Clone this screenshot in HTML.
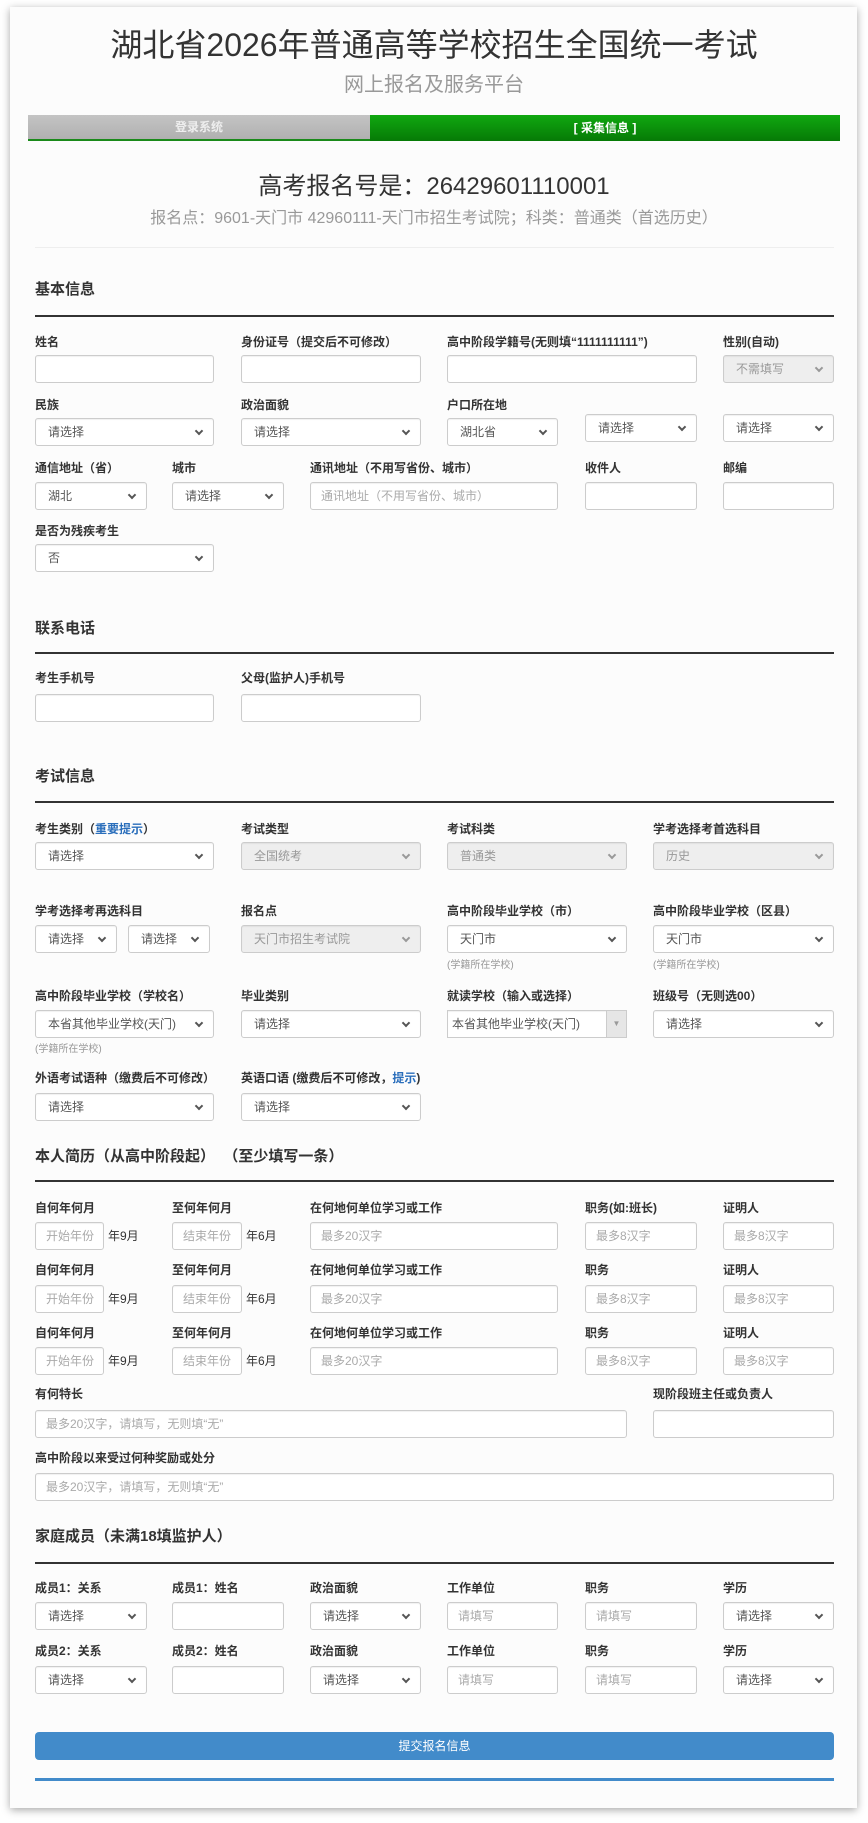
<!DOCTYPE html>
<html><head><meta charset="utf-8">
<style>
*{margin:0;padding:0;box-sizing:border-box}
body{width:868px;height:1823px;background:#fff;font-family:"Liberation Sans","Noto Sans CJK SC",sans-serif;position:relative;overflow:hidden}
.card{position:absolute;left:10px;top:7px;width:847px;height:1801px;background:#fcfcfc;box-shadow:0 2px 8px rgba(0,0,0,.35)}
.a{position:absolute}
.t{position:absolute;left:0;width:868px;text-align:center;white-space:nowrap}
.l{position:absolute;font-size:12px;font-weight:bold;color:#333;line-height:16px;white-space:nowrap}
.h{position:absolute;left:35px;font-size:15px;font-weight:bold;color:#333;line-height:20px}
.ln{position:absolute;left:35px;width:799px;height:2px;background:#333}
.i{position:absolute;height:28px;border:1px solid #ccc;border-radius:3px;background:#fff;font-size:12px;color:#555;padding-left:12px;line-height:26px;white-space:nowrap;overflow:hidden;box-shadow:inset 0 1px 1px rgba(0,0,0,.06)}
.p{color:#aaa;padding-left:10px}
.d{background:#eee;color:#999}
.s::after{content:"";position:absolute;right:11px;top:9px;width:4px;height:4px;border-right:2px solid #555;border-bottom:2px solid #555;transform:rotate(45deg)}
.d.s::after{border-color:#999}
.sm{position:absolute;font-size:10px;color:#999;line-height:14px}
.bl{color:#2a6ebb}
</style></head><body>
<div class="card"></div>
<div class="t" style="top:24px;font-size:32px;color:#333;line-height:42px">湖北省2026年普通高等学校招生全国统一考试</div>
<div class="t" style="top:72px;font-size:20px;color:#999;line-height:26px">网上报名及服务平台</div>
<div class="a" style="left:28px;top:115px;width:342px;height:26px;background:linear-gradient(#c4c4c4,#b0b0b0);border-bottom:2px solid #1a8a1a;color:#eee;font-size:12px;font-weight:bold;text-align:center;line-height:25px">登录系统</div>
<div class="a" style="left:370px;top:115px;width:470px;height:26px;background:linear-gradient(#10a810,#067a06);color:#fff;font-size:12px;font-weight:bold;text-align:center;line-height:26px">[ 采集信息 ]</div>
<div class="t" style="top:172px;font-size:24px;color:#333;line-height:30px">高考报名号是：26429601110001</div>
<div class="t" style="top:209px;font-size:16px;color:#999;line-height:20px">报名点：9601-天门市 42960111-天门市招生考试院；科类：普通类（首选历史）</div>
<div class="a" style="left:35px;top:247px;width:799px;height:1px;background:#eee"></div>

<div class="h" style="top:280px">基本信息</div><div class="ln" style="top:315px"></div>
<div class="l" style="left:35px;top:334px">姓名</div>
<div class="l" style="left:241px;top:334px">身份证号（提交后不可修改）</div>
<div class="l" style="left:447px;top:334px">高中阶段学籍号(无则填“1111111111”)</div>
<div class="l" style="left:723px;top:334px">性别(自动)</div>
<div class="i" style="left:35px;top:355px;width:179px"></div>
<div class="i" style="left:241px;top:355px;width:180px"></div>
<div class="i" style="left:447px;top:355px;width:250px"></div>
<div class="i s d" style="left:723px;top:355px;width:111px">不需填写</div>

<div class="l" style="left:35px;top:397px">民族</div>
<div class="l" style="left:241px;top:397px">政治面貌</div>
<div class="l" style="left:447px;top:397px">户口所在地</div>
<div class="i s" style="left:35px;top:418px;width:179px">请选择</div>
<div class="i s" style="left:241px;top:418px;width:180px">请选择</div>
<div class="i s" style="left:447px;top:418px;width:111px">湖北省</div>
<div class="i s" style="left:585px;top:414px;width:112px">请选择</div>
<div class="i s" style="left:723px;top:414px;width:111px">请选择</div>

<div class="l" style="left:35px;top:460px">通信地址（省）</div>
<div class="l" style="left:172px;top:460px">城市</div>
<div class="l" style="left:310px;top:460px">通讯地址（不用写省份、城市）</div>
<div class="l" style="left:585px;top:460px">收件人</div>
<div class="l" style="left:723px;top:460px">邮编</div>
<div class="i s" style="left:35px;top:482px;width:112px">湖北</div>
<div class="i s" style="left:172px;top:482px;width:112px">请选择</div>
<div class="i p" style="left:310px;top:482px;width:248px">通讯地址（不用写省份、城市）</div>
<div class="i" style="left:585px;top:482px;width:112px"></div>
<div class="i" style="left:723px;top:482px;width:111px"></div>
<div class="l" style="left:35px;top:523px">是否为残疾考生</div>
<div class="i s" style="left:35px;top:544px;width:179px">否</div>

<div class="h" style="top:619px">联系电话</div><div class="ln" style="top:652px"></div>
<div class="l" style="left:35px;top:670px">考生手机号</div>
<div class="l" style="left:241px;top:670px">父母(监护人)手机号</div>
<div class="i" style="left:35px;top:694px;width:179px"></div>
<div class="i" style="left:241px;top:694px;width:180px"></div>

<div class="h" style="top:767px">考试信息</div><div class="ln" style="top:801px"></div>
<div class="l" style="left:35px;top:821px">考生类别（<span class="bl">重要提示</span>）</div>
<div class="l" style="left:241px;top:821px">考试类型</div>
<div class="l" style="left:447px;top:821px">考试科类</div>
<div class="l" style="left:653px;top:821px">学考选择考首选科目</div>
<div class="i s" style="left:35px;top:842px;width:179px">请选择</div>
<div class="i s d" style="left:241px;top:842px;width:180px">全国统考</div>
<div class="i s d" style="left:447px;top:842px;width:180px">普通类</div>
<div class="i s d" style="left:653px;top:842px;width:181px">历史</div>

<div class="l" style="left:35px;top:903px">学考选择考再选科目</div>
<div class="l" style="left:241px;top:903px">报名点</div>
<div class="l" style="left:447px;top:903px">高中阶段毕业学校（市）</div>
<div class="l" style="left:653px;top:903px">高中阶段毕业学校（区县）</div>
<div class="i s" style="left:35px;top:925px;width:82px">请选择</div>
<div class="i s" style="left:128px;top:925px;width:82px">请选择</div>
<div class="i s d" style="left:241px;top:925px;width:180px">天门市招生考试院</div>
<div class="i s" style="left:447px;top:925px;width:180px">天门市</div>
<div class="i s" style="left:653px;top:925px;width:181px">天门市</div>
<div class="sm" style="left:447px;top:959px">(学籍所在学校)</div>
<div class="sm" style="left:653px;top:959px">(学籍所在学校)</div>

<div class="l" style="left:35px;top:988px">高中阶段毕业学校（学校名）</div>
<div class="l" style="left:241px;top:988px">毕业类别</div>
<div class="l" style="left:447px;top:988px">就读学校（输入或选择）</div>
<div class="l" style="left:653px;top:988px">班级号（无则选00）</div>
<div class="i s" style="left:35px;top:1010px;width:179px">本省其他毕业学校(天门)</div>
<div class="i s" style="left:241px;top:1010px;width:180px">请选择</div>
<div class="i" style="left:447px;top:1010px;width:180px;padding-left:4px;border-radius:0">本省其他毕业学校(天门)<span class="a" style="right:0;top:0;width:20px;height:26px;background:#e6e6e6;border-left:1px solid #ccc;color:#999;font-size:8px;text-align:center">▼</span></div>
<div class="i s" style="left:653px;top:1010px;width:181px">请选择</div>
<div class="sm" style="left:35px;top:1043px">(学籍所在学校)</div>

<div class="l" style="left:35px;top:1070px">外语考试语种（缴费后不可修改）</div>
<div class="l" style="left:241px;top:1070px">英语口语 (缴费后不可修改，<span class="bl">提示</span>)</div>
<div class="i s" style="left:35px;top:1093px;width:179px">请选择</div>
<div class="i s" style="left:241px;top:1093px;width:180px">请选择</div>

<div class="h" style="top:1147px">本人简历（从高中阶段起）&nbsp;&nbsp;（至少填写一条）</div><div class="ln" style="top:1180px"></div>

<div class="l" style="left:35px;top:1200px">自何年何月</div><div class="l" style="left:172px;top:1200px">至何年何月</div><div class="l" style="left:310px;top:1200px">在何地何单位学习或工作</div><div class="l" style="left:585px;top:1200px">职务(如:班长)</div><div class="l" style="left:723px;top:1200px">证明人</div>
<div class="i p" style="left:35px;top:1222px;width:69px">开始年份</div><div class="l" style="left:108px;top:1228px;font-weight:normal">年9月</div>
<div class="i p" style="left:172px;top:1222px;width:70px">结束年份</div><div class="l" style="left:246px;top:1228px;font-weight:normal">年6月</div>
<div class="i p" style="left:310px;top:1222px;width:248px">最多20汉字</div><div class="i p" style="left:585px;top:1222px;width:112px">最多8汉字</div><div class="i p" style="left:723px;top:1222px;width:111px">最多8汉字</div>

<div class="l" style="left:35px;top:1262px">自何年何月</div><div class="l" style="left:172px;top:1262px">至何年何月</div><div class="l" style="left:310px;top:1262px">在何地何单位学习或工作</div><div class="l" style="left:585px;top:1262px">职务</div><div class="l" style="left:723px;top:1262px">证明人</div>
<div class="i p" style="left:35px;top:1285px;width:69px">开始年份</div><div class="l" style="left:108px;top:1291px;font-weight:normal">年9月</div>
<div class="i p" style="left:172px;top:1285px;width:70px">结束年份</div><div class="l" style="left:246px;top:1291px;font-weight:normal">年6月</div>
<div class="i p" style="left:310px;top:1285px;width:248px">最多20汉字</div><div class="i p" style="left:585px;top:1285px;width:112px">最多8汉字</div><div class="i p" style="left:723px;top:1285px;width:111px">最多8汉字</div>

<div class="l" style="left:35px;top:1325px">自何年何月</div><div class="l" style="left:172px;top:1325px">至何年何月</div><div class="l" style="left:310px;top:1325px">在何地何单位学习或工作</div><div class="l" style="left:585px;top:1325px">职务</div><div class="l" style="left:723px;top:1325px">证明人</div>
<div class="i p" style="left:35px;top:1347px;width:69px">开始年份</div><div class="l" style="left:108px;top:1353px;font-weight:normal">年9月</div>
<div class="i p" style="left:172px;top:1347px;width:70px">结束年份</div><div class="l" style="left:246px;top:1353px;font-weight:normal">年6月</div>
<div class="i p" style="left:310px;top:1347px;width:248px">最多20汉字</div><div class="i p" style="left:585px;top:1347px;width:112px">最多8汉字</div><div class="i p" style="left:723px;top:1347px;width:111px">最多8汉字</div>

<div class="l" style="left:35px;top:1386px">有何特长</div><div class="l" style="left:653px;top:1386px">现阶段班主任或负责人</div>
<div class="i p" style="left:35px;top:1410px;width:592px">最多20汉字，请填写，无则填“无”</div>
<div class="i" style="left:653px;top:1410px;width:181px"></div>
<div class="l" style="left:35px;top:1450px">高中阶段以来受过何种奖励或处分</div>
<div class="i p" style="left:35px;top:1473px;width:799px">最多20汉字，请填写，无则填“无”</div>

<div class="h" style="top:1527px">家庭成员（未满18填监护人）</div><div class="ln" style="top:1562px"></div>
<div class="l" style="left:35px;top:1580px">成员1：关系</div><div class="l" style="left:172px;top:1580px">成员1：姓名</div><div class="l" style="left:310px;top:1580px">政治面貌</div><div class="l" style="left:447px;top:1580px">工作单位</div><div class="l" style="left:585px;top:1580px">职务</div><div class="l" style="left:723px;top:1580px">学历</div>
<div class="i s" style="left:35px;top:1602px;width:112px">请选择</div><div class="i" style="left:172px;top:1602px;width:112px"></div><div class="i s" style="left:310px;top:1602px;width:111px">请选择</div><div class="i p" style="left:447px;top:1602px;width:111px">请填写</div><div class="i p" style="left:585px;top:1602px;width:112px">请填写</div><div class="i s" style="left:723px;top:1602px;width:111px">请选择</div>
<div class="l" style="left:35px;top:1643px">成员2：关系</div><div class="l" style="left:172px;top:1643px">成员2：姓名</div><div class="l" style="left:310px;top:1643px">政治面貌</div><div class="l" style="left:447px;top:1643px">工作单位</div><div class="l" style="left:585px;top:1643px">职务</div><div class="l" style="left:723px;top:1643px">学历</div>
<div class="i s" style="left:35px;top:1666px;width:112px">请选择</div><div class="i" style="left:172px;top:1666px;width:112px"></div><div class="i s" style="left:310px;top:1666px;width:111px">请选择</div><div class="i p" style="left:447px;top:1666px;width:111px">请填写</div><div class="i p" style="left:585px;top:1666px;width:112px">请填写</div><div class="i s" style="left:723px;top:1666px;width:111px">请选择</div>

<div class="a" style="left:35px;top:1732px;width:799px;height:28px;background:#428bca;border-radius:4px;color:#fff;font-size:12px;text-align:center;line-height:28px">提交报名信息</div>
<div class="a" style="left:35px;top:1778px;width:799px;height:3px;background:#428bca"></div>
</body></html>
